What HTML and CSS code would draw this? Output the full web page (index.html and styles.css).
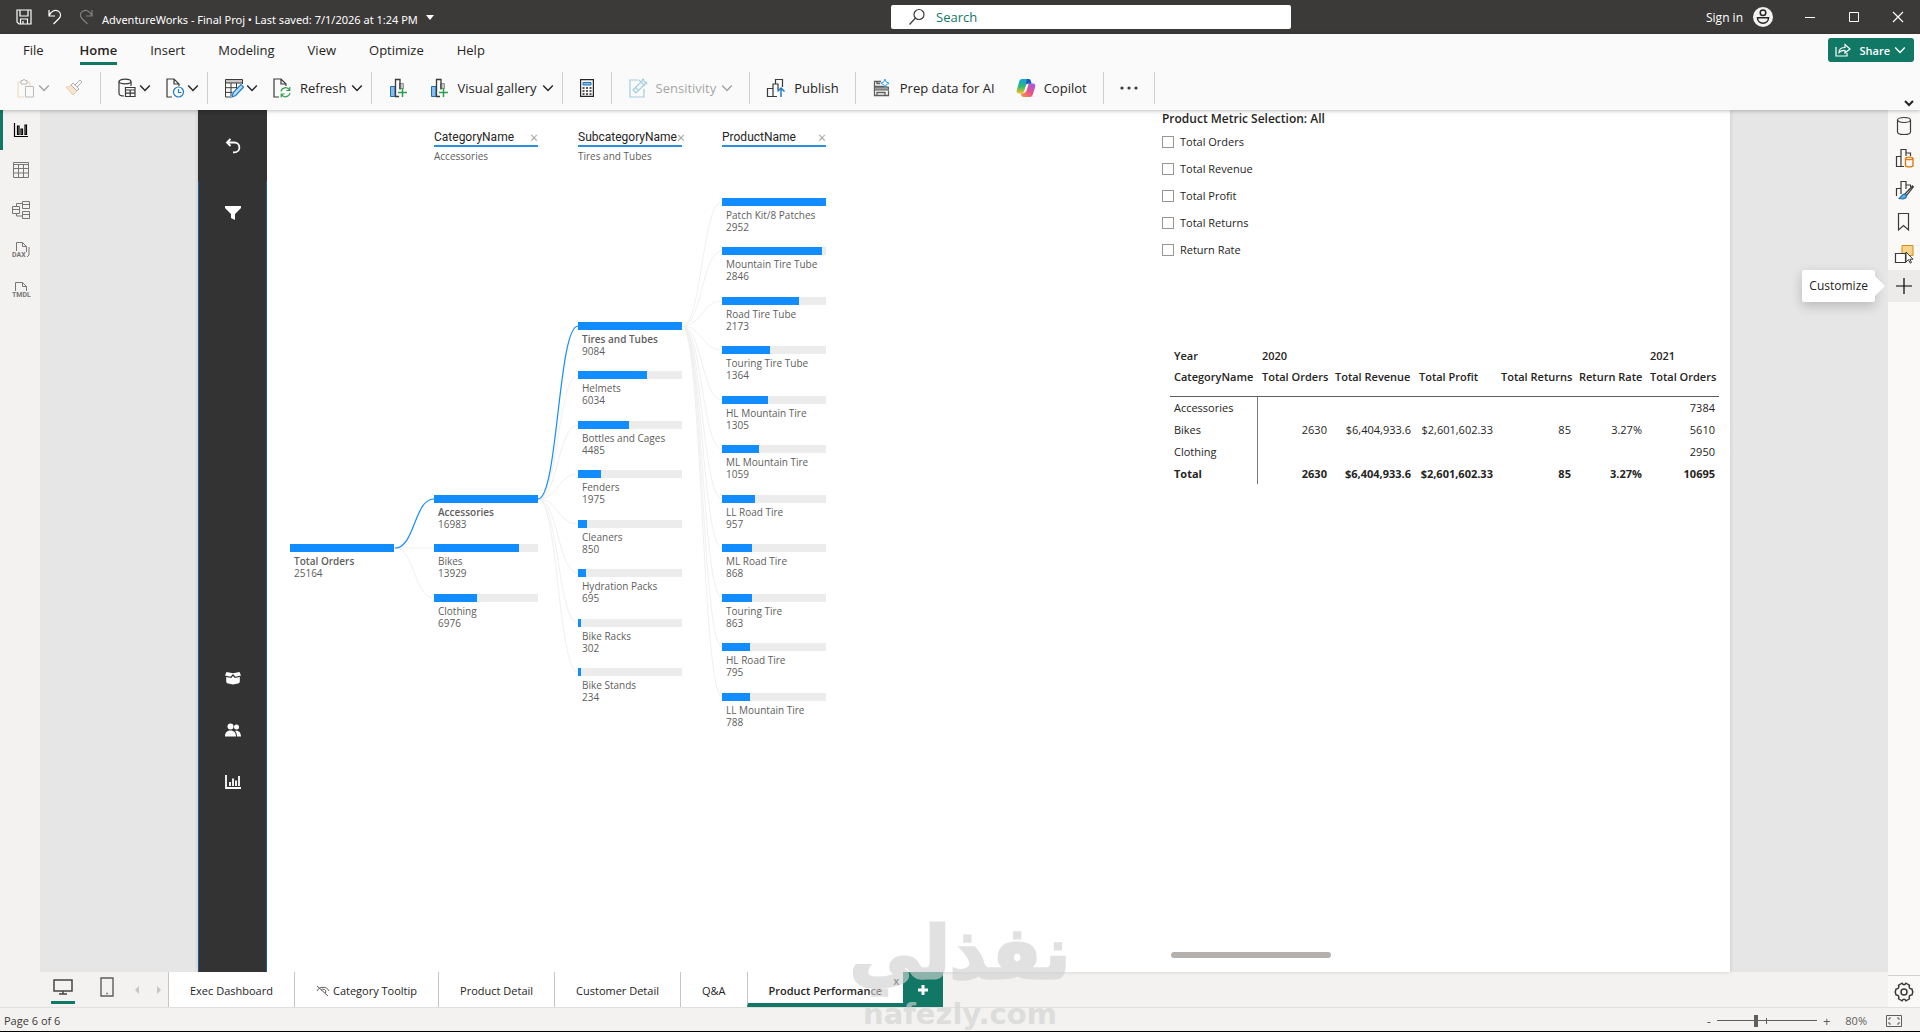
FILE: index.html
```html
<!DOCTYPE html>
<html lang="en">
<head>
    <meta charset="UTF-8">
    <meta name="viewport" content="width=device-width, initial-scale=1.0">
    <title>AdventureWorks - Final Proj</title>
    <link rel="stylesheet" href="styles.css">
</head>
<body>
    <!-- Shared icons -->
    <svg class="sprite" aria-hidden="true">
        <symbol id="chevron" viewBox="0 0 10 10"><path d="M1 3l4 4 4-4" fill="none" stroke="currentColor" stroke-width="1.2"/></symbol>
        <symbol id="chart-add" viewBox="0 0 20 20">
            <path d="M2.500 8.500h4.500v10h-4.500z" fill="#83beec" stroke="#1e70b5"/>
            <path d="M11.500 5.500h4v5h-4z" fill="#c8c6c4" stroke="#979593"/>
            <path d="M7.500 18.500v-17h4.500v10M7 18.500h4" fill="none" stroke="#3b3a39" stroke-width="1.300"/>
            <path d="M14.500 10v9M10 14.500h9" stroke="#2f9e4f" stroke-width="1.500"/>
        </symbol>
    </svg>

    <header class="titlebar">
        <div class="title-left">
            <button class="title-btn" aria-label="Save"><svg width="16" height="16" viewBox="0 0 16 16" fill="none" stroke="currentColor" stroke-width="1.200"><path d="M1 1h14v14H3l-2-2zM4 1v6h8V1M4.500 15v-5h7v5M7 12v3"/></svg></button>
            <button class="title-btn" aria-label="Undo"><svg width="16" height="16" viewBox="0 0 16 16" fill="none" stroke="currentColor" stroke-width="1.200"><path d="M2 1v6h6M2 7c2-5 6-6.500 9-5 3.500 1.800 3 5.500 1 7.500l-5.500 5.500"/></svg></button>
            <button class="title-btn dim" aria-label="Redo"><svg width="16" height="16" viewBox="0 0 16 16" fill="none" stroke="currentColor" stroke-width="1.200"><path d="M14 1v6H8M14 7c-2-5-6-6.500-9-5-3.500 1.800-3 5.500-1 7.500L9.500 15"/></svg></button>
            <span class="doc-name">AdventureWorks - Final Proj • Last saved: 7/1/2026 at 1:24 PM</span>
            <svg class="doc-caret" width="8" height="5" viewBox="0 0 8 5"><path d="M0 0h8L4 5z" fill="currentColor"/></svg>
        </div>
        <label class="search">
            <svg width="18" height="18" viewBox="0 0 18 18" fill="none" stroke="#3b3a39" stroke-width="1.200"><circle cx="11" cy="6.500" r="5"/><path d="M7.500 10L1.500 16.500"/></svg>
            <input type="text" placeholder="Search" aria-label="Search">
        </label>
        <div class="title-right">
            <button class="sign-in">Sign in
                <svg width="20" height="20" viewBox="0 0 20 20"><circle cx="10" cy="10" r="10" fill="#f3f2f1"/><g fill="none" stroke="#252423" stroke-width="1.500"><circle cx="10" cy="5.800" r="2.800"/><path d="M4.500 10.800h11c0 3.500-2.500 5.400-5.500 5.400s-5.500-1.900-5.500-5.400z"/></g></svg>
            </button>
            <button class="win-btn" aria-label="Minimize"><svg width="12" height="12" viewBox="0 0 12 12" stroke="currentColor"><path d="M1 6.500h10"/></svg></button>
            <button class="win-btn" aria-label="Maximize"><svg width="12" height="12" viewBox="0 0 12 12" stroke="currentColor" fill="none"><path d="M1.500 1.500h9v9h-9z"/></svg></button>
            <button class="win-btn" aria-label="Close"><svg width="12" height="12" viewBox="0 0 12 12" stroke="currentColor" stroke-width="1.200"><path d="M1 1l10 10M11 1L1 11"/></svg></button>
        </div>
    </header>

    <div class="ribbon">
        <nav class="menu">
            <button>File</button>
            <button class="active">Home</button>
            <button>Insert</button>
            <button>Modeling</button>
            <button>View</button>
            <button>Optimize</button>
            <button>Help</button>
            <button class="share">
                <svg width="16" height="14" viewBox="0 0 16 14" fill="none" stroke="currentColor" stroke-width="1.200"><path d="M1 4v9h11v-3M4 9.500C4 6 6.500 4.500 10 4.500V1.500l5 4.500-5 4V7.500C7.500 7.300 5.500 8 4 9.500z"/></svg>
                Share
                <svg class="chev"><use href="#chevron"/></svg>
            </button>
        </nav>
        <div class="toolbar">
            <div class="group">
                <button class="tool faded" aria-label="Paste">
                    <svg width="20" height="20" viewBox="0 0 20 20" fill="none"><path d="M2 4h3M11 4h3v4M2 4v15h6" stroke="#e8a14c"/><path d="M5 2.500h2l1-1.500 1 1.500h2V6H5z" stroke="#605e5c"/><path d="M9.500 8.500h8v10.500h-8z" stroke="#605e5c"/></svg>
                    <svg class="chev"><use href="#chevron"/></svg>
                </button>
                <button class="tool faded" aria-label="Format painter">
                    <svg width="20" height="20" viewBox="0 0 20 20"><path d="M2 9l7 8 4-4-6-6c-1.500 1.500-3 2-5 2z" fill="#f5c98f" stroke="#c98a3a"/><path d="M7 7l2-2 6 6-2 2zM11 7l5-5 2 2-5 5" fill="none" stroke="#484644"/></svg>
                </button>
            </div>
            <div class="group drop">
                <button class="tool" aria-label="Get data">
                    <svg width="20" height="20" viewBox="0 0 20 20" fill="none" stroke="#3b3a39" stroke-width="1.200"><ellipse cx="8" cy="3.500" rx="6" ry="2.300"/><path d="M2 3.500v12c0 1.500 2 2.500 5 2.500M14 3.500V8M8.500 9.500h9.500v9H8.500zM8.500 12h9.500M8.500 15.200h9.500M13.200 12v6.500"/></svg>
                    <svg class="chev"><use href="#chevron"/></svg>
                </button>
                <button class="tool" aria-label="Recent sources">
                    <svg width="20" height="20" viewBox="0 0 20 20" fill="none" stroke="#3b3a39" stroke-width="1.200"><path d="M7 19H2V1h7l5 5v2M9 1v5h5"/><g stroke="#1e7cc8"><circle cx="13.500" cy="14" r="5"/><path d="M13.500 11v3.500h3"/></g></svg>
                    <svg class="chev"><use href="#chevron"/></svg>
                </button>
            </div>
            <div class="group drop">
                <button class="tool" aria-label="Transform data">
                    <svg width="20" height="20" viewBox="0 0 20 20" fill="none"><path d="M1.500 1.500h17v3.500h-17z" fill="#c8c6c4"/><path d="M7 19H1.500V1.500h17V6M1.500 5h17M1.500 9.700h12M1.500 14.400h7M7 5v13M12.500 5v6" stroke="#3b3a39"/><path d="M8 19l1.200-4.500L17 6.700l2.500 2.500-7.800 8.300z" fill="#b5dcf7" stroke="#1e7cc8" stroke-width="1.200"/></svg>
                    <svg class="chev"><use href="#chevron"/></svg>
                </button>
                <button class="tool">
                    <svg width="20" height="20" viewBox="0 0 20 20" fill="none" stroke="#3b3a39" stroke-width="1.200"><path d="M7 19H2V1h7l5 5v2M9 1v5h5"/><path d="M9 13.500a4.600 4.600 0 0 1 8.500-1.500M17.800 9v3.500h-3.500M18 15a4.600 4.600 0 0 1-8.500 1.500M9.200 19.500V16h3.500" stroke="#2f9e4f"/></svg>
                    <span>Refresh</span>
                    <svg class="chev"><use href="#chevron"/></svg>
                </button>
            </div>
            <div class="group drop wide">
                <button class="tool" aria-label="New visual"><svg width="20" height="20"><use href="#chart-add"/></svg></button>
                <button class="tool">
                    <svg width="20" height="20"><use href="#chart-add"/></svg>
                    <span>Visual gallery</span>
                    <svg class="chev"><use href="#chevron"/></svg>
                </button>
            </div>
            <div class="group">
                <button class="tool" aria-label="New measure">
                    <svg width="16" height="20" viewBox="0 0 16 20" fill="none"><path d="M1.600 1.600h12.800v16.800H1.600z" stroke="#252423" stroke-width="1.200"/><path d="M4 4.500h8v2.500H4z" fill="#83beec" stroke="#1e70b5"/><path d="M3.500 10h2M7 10h2M10.500 10h2M3.500 13h2M7 13h2M10.500 13h2M3.500 16h2M7 16h2M10.500 16h2" stroke="#252423" stroke-width="1.600"/></svg>
                </button>
            </div>
            <div class="group">
                <button class="tool faded">
                    <svg width="20" height="20" viewBox="0 0 20 20" fill="none" stroke="#1e8fb5" stroke-width="1.200"><path d="M10 2H2v17h14v-8"/><path d="M5 12l8-8 3 3-8 8zM7 14l-2-2M11 2l6 6M14 1l5 5M12 5l4-4M15 8l4-4M8 10l3 3"/></svg>
                    <span>Sensitivity</span>
                    <svg class="chev"><use href="#chevron"/></svg>
                </button>
            </div>
            <div class="group">
                <button class="tool">
                    <svg width="20" height="20" viewBox="0 0 20 20" fill="none" stroke="#3b3a39" stroke-width="1.200"><path d="M7 18.500H1.500v-8h5M11 18.500H7V6h5v6M9.500 6V1.500h7V9"/><path d="M15 19v-9M11.500 13.500L15 10l3.500 3.500" stroke="#1e7cc8" stroke-width="1.500"/></svg>
                    <span>Publish</span>
                </button>
            </div>
            <div class="group wide">
                <button class="tool">
                    <svg width="20" height="20" viewBox="0 0 20 20" fill="none" stroke="#605e5c"><path d="M9 3.500H2.500v5h12M5 3.500v2h3M2.500 8.500v9h14v-5M5 17.500v-3h8v3" stroke-width="1.300"/><path d="M2.500 9h14v3h-14z" fill="#a19f9d"/><path d="M13 1l1.200 3 3 1.200-3 1.300L13 9.500l-1.200-3-3-1.300 3-1.200z" fill="#fff" stroke="#3aa0e0"/></svg>
                    <span>Prep data for AI</span>
                </button>
                <button class="tool">
                    <svg width="20" height="20" viewBox="0 0 20 20">
                        <defs>
                            <linearGradient id="cop1" x1="0" y1="0" x2="0" y2="1"><stop offset="0" stop-color="#16a0dc"/><stop offset=".5" stop-color="#2db67a"/><stop offset="1" stop-color="#f5c518"/></linearGradient>
                            <linearGradient id="cop2" x1="1" y1="0" x2="0" y2="1"><stop offset="0" stop-color="#9b5cf0"/><stop offset=".5" stop-color="#e8508f"/><stop offset="1" stop-color="#f8963a"/></linearGradient>
                        </defs>
                        <path d="M6 1h6.500c1.400 0 2 1 2.400 2.400l.6 2h-3c-1.500 0-2.200 1-2.600 2.200L8 13.500C7.500 15 6.800 15.500 5 15.500H3c-2 0-2.700-1.800-2.200-3.500l2.400-8.600C3.700 1.900 4.500 1 6 1z" fill="url(#cop1)"/>
                        <path d="M14 19H7.500c-1.400 0-2-1-2.400-2.400l-.4-1.200H7c1.500 0 2.200-.8 2.600-2l2-6c.5-1.500 1.200-2 3-2H17c2 0 2.700 1.800 2.200 3.500l-2.400 7.700C16.300 18.100 15.500 19 14 19z" fill="url(#cop2)"/>
                        <path d="M12.500 1c1.400 0 2 1 2.400 2.400l.6 2h-3l-2.500.6L11 1z" fill="#1b52c4"/>
                        <path d="M10.800 6.200h1.700l-2.400 7.500H8.400z" fill="#fff"/>
                    </svg>
                    <span>Copilot</span>
                </button>
            </div>
            <div class="group">
                <button class="tool" aria-label="More options"><svg width="18" height="4" viewBox="0 0 18 4" fill="#3b3a39"><circle cx="2" cy="2" r="1.600"/><circle cx="9" cy="2" r="1.600"/><circle cx="16" cy="2" r="1.600"/></svg></button>
            </div>
            <button class="collapse" aria-label="Collapse ribbon"><svg width="10" height="10" viewBox="0 0 10 10" fill="none" stroke="#252423" stroke-width="2"><path d="M1 3l4 4 4-4"/></svg></button>
        </div>
    </div>

    <main class="workspace">
        <nav class="views">
            <button class="active" aria-label="Report view"><svg width="16" height="16" viewBox="0 0 16 16" fill="none" stroke="#000" stroke-width="1.200"><path d="M1.500 1v13.500H15M4.500 12.500V4h1.500v8.500zM8 12.500V7h1.500v5.500zM12 12.500V3h1.500v9.500z"/></svg></button>
            <button aria-label="Table view"><svg width="16" height="16" viewBox="0 0 16 16" fill="none" stroke="currentColor"><path d="M.5.5h15v15H.5zM.5 2.500h15M.5 6.500h15M.5 11h15M5.500 2.500v13M10.500 2.500v13"/></svg></button>
            <button aria-label="Model view"><svg width="18" height="18" viewBox="0 0 18 18" fill="none" stroke="currentColor"><path d="M.5 5.500h7v7h-7zM.5 8.500h7M10.500.5h7v7h-7zM10.500 3.500h7M10.500 10.500h7v7h-7zM10.500 13.500h7M4.500 5.500v-3h6M4.500 12.500v2.500h6"/></svg></button>
            <button aria-label="DAX query view"><svg width="20" height="18" viewBox="0 0 20 18" fill="none" stroke="currentColor"><path d="M5.500 10V1.500h6l4 4V11M11.500 1.500v4h4M18 6v8l-2 2"/><text class="icon-text" x="1" y="16">DAX</text></svg></button>
            <button aria-label="TMDL view"><svg width="20" height="18" viewBox="0 0 20 18" fill="none" stroke="currentColor"><path d="M4.500 10V1.500h7l4 4V10M11.500 1.500v4h4"/><text class="icon-text" x="1" y="16">TMDL</text></svg></button>
        </nav>

        <section class="center">
            <div class="stage">
                <div class="page">
                    <nav class="page-nav">
                        <button class="back" aria-label="Back"><svg width="16" height="16" viewBox="0 0 16 16" fill="none" stroke="#fff" stroke-width="1.800"><path d="M5.500 1L2 4.500 5.500 8M2 4.500h7.500a4.800 4.800 0 0 1 0 9.800H8"/></svg></button>
                        <div class="page-links">
                            <button aria-label="Filters"><svg width="16" height="14" viewBox="0 0 16 14"><path d="M0 0h16v2l-6 6v6l-4-2V8L0 2z" fill="#fff"/></svg></button>
                            <div class="bottom-links">
                                <button aria-label="Products"><svg width="16" height="14" viewBox="0 0 16 14" fill="#fff"><path d="M1.500 1L8 2.200 14.500 1 16 4.500l-5.500 1.300L8 3 5.500 5.800 0 4.500z"/><path d="M1.200 6l5 1L8 5l1.800 2 5-1v4.500c0 1-.8 1.700-1.800 2l-5 1-5-1c-1-.3-1.800-1-1.800-2z"/></svg></button>
                                <button aria-label="Customers"><svg width="16" height="14" viewBox="0 0 16 14" fill="#fff"><circle cx="5.500" cy="3.500" r="3"/><circle cx="11.500" cy="4" r="2.500"/><path d="M0 13.500c0-3.800 2-6 5.500-6s5.500 2.200 5.500 6zM12 13.500c0-2.500-.6-4.500-2-5.500 3.500-1 6 1.500 6 5.500z"/></svg></button>
                                <button aria-label="Dashboard"><svg width="16" height="14" viewBox="0 0 16 14" fill="none" stroke="#fff" stroke-width="1.800"><path d="M1 0v13h15M5 11V7M8 11V3.500M11 11V5.500M14 11V1"/></svg></button>
                            </div>
                        </div>
                    </nav>

                    <!-- Decomposition tree -->
                    <div class="tree">
                        <svg class="links" width="536" height="600" viewBox="0 0 536 600" fill="none">
                            <g stroke="#f0f0f0">
                                <path d="M105 438H144M105 438C125 438 124 488 144 488"/>
                                <path d="M248 389C268 389 268 265 288 265M248 389C268 389 268 315 288 315M248 389C268 389 268 364 288 364M248 389C268 389 268 414 288 414M248 389C268 389 268 463 288 463M248 389C268 389 268 513 288 513M248 389C268 389 268 562 288 562"/>
                                <path d="M392 216C412 216 412 92 432 92M392 216C412 216 412 141 432 141M392 216C412 216 412 191 432 191M392 216C412 216 412 240 432 240M392 216C412 216 412 290 432 290M392 216C412 216 412 339 432 339M392 216C412 216 412 389 432 389M392 216C412 216 412 438 432 438M392 216C412 216 412 488 432 488M392 216C412 216 412 537 432 537M392 216C412 216 412 587 432 587"/>
                            </g>
                            <g stroke="#118dff" stroke-width="1.200">
                                <path d="M105 438C125 438 124 389 144 389"/>
                                <path d="M248 389C268 389 268 216 288 216"/>
                            </g>
                        </svg>
                        <div class="level root">
                            <ul>
                                <li class="node selected"><div class="bar"><i style="width: 100%"></i></div><b>Total Orders</b><span>25164</span></li>
                            </ul>
                        </div>
                        <div class="level category">
                            <div class="level-head"><h3>CategoryName</h3><button aria-label="Remove level">×</button></div>
                            <p>Accessories</p>
                            <ul>
                                <li class="node selected"><div class="bar"><i style="width: 100%"></i></div><b>Accessories</b><span>16983</span></li>
                                <li class="node"><div class="bar"><i style="width: 82%"></i></div><b>Bikes</b><span>13929</span></li>
                                <li class="node"><div class="bar"><i style="width: 41%"></i></div><b>Clothing</b><span>6976</span></li>
                            </ul>
                        </div>
                        <div class="level subcategory">
                            <div class="level-head"><h3>SubcategoryName</h3><button aria-label="Remove level">×</button></div>
                            <p>Tires and Tubes</p>
                            <ul>
                                <li class="node selected"><div class="bar"><i style="width: 100%"></i></div><b>Tires and Tubes</b><span>9084</span></li>
                                <li class="node"><div class="bar"><i style="width: 66%"></i></div><b>Helmets</b><span>6034</span></li>
                                <li class="node"><div class="bar"><i style="width: 49%"></i></div><b>Bottles and Cages</b><span>4485</span></li>
                                <li class="node"><div class="bar"><i style="width: 22%"></i></div><b>Fenders</b><span>1975</span></li>
                                <li class="node"><div class="bar"><i style="width: 9%"></i></div><b>Cleaners</b><span>850</span></li>
                                <li class="node"><div class="bar"><i style="width: 8%"></i></div><b>Hydration Packs</b><span>695</span></li>
                                <li class="node"><div class="bar"><i style="width: 3%"></i></div><b>Bike Racks</b><span>302</span></li>
                                <li class="node"><div class="bar"><i style="width: 3%"></i></div><b>Bike Stands</b><span>234</span></li>
                            </ul>
                        </div>
                        <div class="level product">
                            <div class="level-head"><h3>ProductName</h3><button aria-label="Remove level">×</button></div>
                            <p></p>
                            <ul>
                                <li class="node"><div class="bar"><i style="width: 100%"></i></div><b>Patch Kit/8 Patches</b><span>2952</span></li>
                                <li class="node"><div class="bar"><i style="width: 96%"></i></div><b>Mountain Tire Tube</b><span>2846</span></li>
                                <li class="node"><div class="bar"><i style="width: 74%"></i></div><b>Road Tire Tube</b><span>2173</span></li>
                                <li class="node"><div class="bar"><i style="width: 46%"></i></div><b>Touring Tire Tube</b><span>1364</span></li>
                                <li class="node"><div class="bar"><i style="width: 44%"></i></div><b>HL Mountain Tire</b><span>1305</span></li>
                                <li class="node"><div class="bar"><i style="width: 36%"></i></div><b>ML Mountain Tire</b><span>1059</span></li>
                                <li class="node"><div class="bar"><i style="width: 32%"></i></div><b>LL Road Tire</b><span>957</span></li>
                                <li class="node"><div class="bar"><i style="width: 29%"></i></div><b>ML Road Tire</b><span>868</span></li>
                                <li class="node"><div class="bar"><i style="width: 29%"></i></div><b>Touring Tire</b><span>863</span></li>
                                <li class="node"><div class="bar"><i style="width: 27%"></i></div><b>HL Road Tire</b><span>795</span></li>
                                <li class="node"><div class="bar"><i style="width: 27%"></i></div><b>LL Mountain Tire</b><span>788</span></li>
                            </ul>
                        </div>
                    </div>

                    <div class="metrics">
                        <fieldset class="slicer">
                            <legend>Product Metric Selection: All</legend>
                            <label><input type="checkbox">Total Orders</label>
                            <label><input type="checkbox">Total Revenue</label>
                            <label><input type="checkbox">Total Profit</label>
                            <label><input type="checkbox">Total Returns</label>
                            <label><input type="checkbox">Return Rate</label>
                        </fieldset>
                        <table class="matrix">
                            <colgroup><col class="c-name"><col class="c-orders"><col class="c-revenue"><col class="c-profit"><col class="c-returns"><col class="c-rate"><col class="c-orders"></colgroup>
                            <thead>
                                <tr><th>Year</th><th colspan="5">2020</th><th>2021</th></tr>
                                <tr><th>CategoryName</th><th>Total Orders</th><th>Total Revenue</th><th>Total Profit</th><th>Total Returns</th><th>Return Rate</th><th>Total Orders</th></tr>
                            </thead>
                            <tbody>
                                <tr><th>Accessories</th><td></td><td></td><td></td><td></td><td></td><td>7384</td></tr>
                                <tr><th>Bikes</th><td>2630</td><td>$6,404,933.6</td><td>$2,601,602.33</td><td>85</td><td>3.27%</td><td>5610</td></tr>
                                <tr><th>Clothing</th><td></td><td></td><td></td><td></td><td></td><td>2950</td></tr>
                                <tr class="total"><th>Total</th><td>2630</td><td>$6,404,933.6</td><td>$2,601,602.33</td><td>85</td><td>3.27%</td><td>10695</td></tr>
                            </tbody>
                        </table>
                        <div class="scroll-thumb"></div>
                    </div>
                </div>
            </div>

            <div class="sheet-bar">
                <div class="layouts">
                    <button class="active" aria-label="Desktop layout"><svg width="20" height="16" viewBox="0 0 20 16" fill="none" stroke="#484644" stroke-width="1.500"><path d="M1 1h18v11H1zM10 12v3M6 15h8"/></svg></button>
                    <button class="phone" aria-label="Mobile layout"><svg width="14" height="20" viewBox="0 0 14 20" fill="none" stroke="#605e5c" stroke-width="1.400"><path d="M1 1h12v18H1zM6.300 16.500h1.500"/></svg></button>
                    <button class="arrow" aria-label="Previous pages"><svg width="6" height="8" viewBox="0 0 6 8"><path d="M5 0v8L1 4z" fill="#c8c6c4"/></svg></button>
                    <button class="arrow" aria-label="Next pages"><svg width="6" height="8" viewBox="0 0 6 8"><path d="M1 0v8l4-4z" fill="#c8c6c4"/></svg></button>
                </div>
                <button class="sheet">Exec Dashboard</button>
                <button class="sheet"><svg width="14" height="12" viewBox="0 0 14 12" fill="none" stroke="#605e5c"><path d="M1 6c2-5 10-5 12 0M1 1l11 10M9.500 8A2.500 2.500 0 1 0 5 5.500"/></svg>Category Tooltip</button>
                <button class="sheet">Product Detail</button>
                <button class="sheet">Customer Detail</button>
                <button class="sheet">Q&amp;A</button>
                <button class="sheet current">Product Performance<span class="close">x</span></button>
                <button class="add" aria-label="New page"><svg width="12" height="12" viewBox="0 0 12 12" stroke="#fff" stroke-width="3"><path d="M6 1v10M1 6h10"/></svg></button>
            </div>
        </section>

        <aside class="panes">
            <button aria-label="Data"><svg width="20" height="20" viewBox="0 0 20 20" fill="none" stroke="#3b3a39" stroke-width="1.200"><ellipse cx="10" cy="4" rx="6.500" ry="2.500"/><path d="M3.500 4v12c0 3.300 13 3.300 13 0V4"/></svg></button>
            <button aria-label="Build visual"><svg width="20" height="20" viewBox="0 0 20 20" fill="none" stroke="#3b3a39" stroke-width="1.200"><path d="M10 18.500H2.500v-10H7M7 18.500v-17h5V8M12 5h4.500v3"/><path d="M11.500 10.500v7c0 1.800 7.500 1.800 7.500 0v-7c0-1.800-7.500-1.800-7.500 0c0 1.500 7.500 1.500 7.500 0" stroke="#e07b12" stroke-width="1.400"/></svg></button>
            <button aria-label="Format visual"><svg width="20" height="20" viewBox="0 0 20 20" fill="none" stroke="#3b3a39" stroke-width="1.200"><path d="M2.500 16V8.500H7M7 14V1.500h5V9M12 5h4.500v2"/><path d="M11 14l7.500-8 .8.900L12.500 15.500z" fill="#fff"/><path d="M4.500 18.500c3 0 2.500-4.500 6-4.300 2.500.3 3 4.300-1.500 4.600z" fill="#62aee8" stroke="#1e70b5"/></svg></button>
            <button aria-label="Bookmarks"><svg width="20" height="20" viewBox="0 0 20 20" fill="none" stroke="#3b3a39" stroke-width="1.200"><path d="M4.500 1.500h10v16.500l-5-4.500-5 4.500z"/></svg></button>
            <button aria-label="Selection"><svg width="20" height="20" viewBox="0 0 20 20" fill="none"><path d="M8 1.500h11v10H8z" fill="#f8d48a" stroke="#d68a1c"/><path d="M1.500 9.500h10v9h-10z" fill="#fff" stroke="#3b3a39" stroke-width="1.200"/><path d="M12 8v10l2.500-2.300 1.700 3.500 1.300-.7-1.600-3.300H19z" fill="#fff" stroke="#3b3a39"/></svg></button>
            <button class="hover" aria-label="Customize"><svg width="18" height="18" viewBox="0 0 18 18" stroke="#000" stroke-width="1.200"><path d="M9 1v16M1 9h16"/></svg><span class="tooltip">Customize</span></button>
            <button class="gear" aria-label="Settings"><svg width="20" height="20" viewBox="0 0 20 20" fill="none" stroke="#3b3a39" stroke-width="1.500"><circle cx="10" cy="10" r="3"/><path d="M8 1.200c1 2 3 2 4 0l3.500 2c-1 2 0 3.800 2.400 3.700l.9 3.100-.9 3.100c-2.400-.1-3.400 1.700-2.400 3.700l-3.500 2c-1-2-3-2-4 0l-3.500-2c1-2 0-3.800-2.400-3.700L1.200 10l.9-3.100C4.500 7 5.500 5.200 4.500 3.200z"/></svg></button>
        </aside>
    </main>

    <footer class="status">
        <span>Page 6 of 6</span>
        <div class="zoom">
            <button aria-label="Zoom out">-</button>
            <input type="range" min="0" max="100" value="39" aria-label="Zoom">
            <button aria-label="Zoom in">+</button>
            <span class="percent">80%</span>
            <button class="fit" aria-label="Fit to page"><svg width="16" height="12" viewBox="0 0 16 12" fill="none" stroke="#605e5c"><path d="M.5.500h15v11H.5zM3 5V3h2M11 3h2v2M13 7v2h-2M5 9H3V7"/></svg></button>
        </div>
    </footer>

    <div class="watermark" aria-hidden="true">
        <span class="wm-ar" lang="ar" dir="rtl">نفذلي</span>
        <span class="wm-en">nafezly.com</span>
    </div>
</body>
</html>
```
FILE: styles.css
```css
* {
    box-sizing: border-box;
}
body {
    margin: 0;
    height: 100vh;
    display: flex;
    flex-direction: column;
    overflow: hidden;
    position: relative;
    font-family: "Open Sans", "Noto Sans", sans-serif;
    font-size: 13px;
    color: #252423;
    background-color: #f3f2f1;
}
button {
    border: none;
    background: none;
    padding: 0;
    margin: 0;
    font: inherit;
    color: inherit;
    display: flex;
    align-items: center;
    justify-content: center;
    cursor: pointer;
}
svg {
    flex: none;
}
h3, p, ul {
    margin: 0;
    padding: 0;
    list-style: none;
}
.sprite {
    position: absolute;
    width: 0;
    height: 0;
}
.chev {
    width: 12px;
    height: 12px;
}

/* Title bar */
.titlebar {
    flex: none;
    height: 34px;
    display: grid;
    grid-template-columns: 891fr 400px 629fr;
    align-items: center;
    background-color: #3b3a39;
    color: #fff;
    font-size: 12px;
}
.title-left {
    display: flex;
    align-items: center;
    padding-left: 16px;
}
.title-btn {
    width: 16px;
    margin-right: 15px;
}
.title-btn.dim {
    opacity: 0.35;
    margin-right: 8px;
}
.doc-name {
    padding-top: 4px;
    font-family: "Noto Sans", sans-serif;
    font-size: 11px;
}
.doc-caret {
    margin-left: 8px;
}
.search {
    height: 24px;
    display: flex;
    align-items: center;
    gap: 10px;
    padding-left: 17px;
    background-color: #fff;
    border-radius: 2px;
}
.search input {
    flex: 1;
    border: none;
    outline: none;
    background: none;
    padding: 0;
    font: inherit;
    font-size: 13px;
}
.search input::placeholder {
    color: #117865;
}
.title-right {
    display: flex;
    justify-content: flex-end;
}
.sign-in {
    gap: 10px;
    margin-right: 15px;
    font-size: 12px;
}
.win-btn {
    width: 44px;
    height: 34px;
}

/* Ribbon */
.ribbon {
    flex: none;
    background-color: #fafafa;
    box-shadow: 0 1px 4px rgba(0,0,0,0.25);
    position: relative;
    z-index: 2;
}
.menu {
    height: 32px;
    display: flex;
    align-items: center;
    gap: 33px;
    padding: 0 6px 0 23px;
}
.menu button {
    height: 30px;
}
.menu .active {
    margin-left: 3px;
    font-weight: 600;
    border-bottom: 3px solid #117865;
    border-top: 3px solid transparent;
}
.menu .share {
    height: 24px;
    margin-left: auto;
    padding: 0 8px 0 7px;
    gap: 8px;
    border-radius: 3px;
    background-color: #117865;
    color: #fff;
    font-size: 11px;
    font-weight: 600;
}
.share .chev {
    margin-left: -4px;
}
.toolbar {
    height: 44px;
    display: flex;
    align-items: center;
}
.group {
    height: 32px;
    display: flex;
    align-items: center;
    gap: 14px;
    padding: 0 16px;
    border-right: 1px solid #d2d0ce;
}
.group.drop {
    padding-right: 8px;
}
.group.wide {
    gap: 21px;
}
.tool {
    height: 32px;
    gap: 8px;
}
.tool .chev {
    margin-left: -6px;
}
.tool span + .chev {
    margin-left: -3px;
}
.faded {
    opacity: 0.4;
}
.collapse {
    margin-left: auto;
    align-self: flex-end;
    padding: 0 6px 2px 0;
}

/* Workspace */
.workspace {
    flex: 1;
    min-height: 0;
    display: flex;
}
.views {
    width: 40px;
    display: flex;
    flex-direction: column;
    color: #797775;
}
.views button {
    height: 40px;
    padding-right: 2px;
    border-left: 3px solid transparent;
}
.views .active {
    border-left-color: #117865;
}
.icon-text {
    font-family: Roboto, sans-serif;
    font-size: 7px;
    font-weight: 700;
    fill: currentColor;
    stroke: none;
}
.center {
    flex: 1;
    min-width: 0;
    display: flex;
    flex-direction: column;
}
.stage {
    flex: 1;
    min-height: 0;
    display: flex;
    justify-content: center;
    background-color: #e6e6e6;
}
.page {
    flex: 1;
    max-width: 1532px;
    display: flex;
    background-color: #fff;
    box-shadow: 0 0 4px rgba(0,0,0,0.15);
}
.page-nav {
    width: 69px;
    display: flex;
    flex-direction: column;
    background-color: #333;
}
.page-nav .back {
    height: 71px;
}
.page-links {
    flex: 1;
    display: flex;
    flex-direction: column;
    justify-content: space-between;
    padding: 25px 0 183px;
    border: 1px solid #1c5a94;
    border-top: none;
    border-bottom: none;
}
.page-links button {
    width: 100%;
}
.bottom-links {
    display: flex;
    flex-direction: column;
    gap: 38px;
}

/* Decomposition tree */
.tree {
    position: relative;
    display: flex;
    gap: 40px;
    margin-left: 23px;
    color: #605e5c;
    font-size: 10px;
    line-height: 12px;
}
.links {
    position: absolute;
    left: 0;
    top: 0;
}
.level {
    width: 104px;
    padding-top: 20px;
}
.level-head {
    display: flex;
    justify-content: space-between;
    align-items: center;
    height: 17px;
    border-bottom: 2px solid #2b8ee0;
}
.level-head h3 {
    font-family: Roboto, sans-serif;
    font-size: 12px;
    font-weight: 400;
    line-height: 15px;
    color: #252423;
}
.level-head button {
    font-size: 14px;
    line-height: 15px;
    color: #a19f9d;
}
.level p {
    height: 15px;
    padding-top: 3px;
    white-space: nowrap;
}
.root ul {
    padding-top: 414px;
}
.category ul {
    padding-top: 333px;
}
.subcategory ul {
    padding-top: 160px;
}
.product ul {
    padding-top: 36px;
}
.node {
    padding-bottom: 14px;
}
.node:nth-child(even) {
    padding-bottom: 15px;
}
.node b, .node span {
    display: block;
    padding-left: 4px;
    white-space: nowrap;
    font-weight: 400;
}
.node.selected b {
    font-weight: 600;
}
.bar {
    height: 8px;
    margin-bottom: 3px;
    background-color: #ececec;
}
.bar i {
    display: block;
    height: 8px;
    background-color: #118dff;
}

/* Slicer and matrix */
.metrics {
    margin-left: auto;
    padding-right: 11px;
    display: flex;
    flex-direction: column;
}
.slicer {
    margin: 0;
    padding: 0;
    border: none;
    font-size: 11px;
}
.slicer legend {
    padding: 0;
    font-size: 12px;
    font-weight: 600;
    line-height: 18px;
}
.slicer label {
    height: 27px;
    display: flex;
    align-items: center;
    gap: 6px;
}
.slicer input {
    appearance: none;
    width: 12px;
    height: 12px;
    margin: 0;
    border: 1px solid #979593;
    background-color: #fff;
}
.matrix {
    width: 549px;
    margin: 81px 0 0 8px;
    border-collapse: collapse;
    table-layout: fixed;
    font-size: 11px;
}
.matrix th, .matrix td {
    height: 22px;
    padding: 0 4px;
    text-align: right;
    font-weight: 400;
    white-space: nowrap;
}
.matrix th {
    text-align: left;
}
.matrix thead th {
    height: 22px;
    font-weight: 600;
}
.matrix thead tr:last-child th {
    height: 30px;
    padding-bottom: 8px;
    border-bottom: 1px solid #605e5c;
}
.matrix tbody th {
    border-right: 1px solid #797775;
}
.matrix .total th, .matrix .total td {
    font-weight: 700;
}
.c-name {
    width: 88px;
}
.c-orders {
    width: 73px;
}
.c-revenue {
    width: 84px;
}
.c-profit {
    width: 82px;
}
.c-returns {
    width: 78px;
}
.c-rate {
    width: 71px;
}
.scroll-thumb {
    width: 160px;
    height: 6px;
    margin: auto 0 14px 9px;
    border-radius: 3px;
    background-color: #b3b0ad;
}

/* Page tabs */
.sheet-bar {
    flex: none;
    height: 35px;
    display: flex;
}
.layouts {
    width: 128px;
    display: flex;
    align-items: flex-start;
    padding-left: 11px;
}
.layouts button {
    flex: none;
    height: 32px;
}
.layouts .active {
    width: 24px;
    margin-right: 25px;
    border-bottom: 3px solid #117865;
}
.layouts .phone {
    width: 14px;
    margin-right: 20px;
    padding-bottom: 3px;
}
.layouts .arrow {
    width: 6px;
    height: 36px;
    margin-right: 16px;
}
.layouts .arrow:last-child {
    margin-right: 0;
}
.sheet {
    position: relative;
    gap: 3px;
    padding: 2px 21px 0;
    background-color: #fff;
    border-left: 1px solid #c8c6c4;
    font-size: 11px;
    white-space: nowrap;
}
.sheet.current {
    padding-top: 5px;
    font-weight: 600;
    border-bottom: 4px solid #117865;
}
.sheet .close {
    position: absolute;
    right: 4px;
    top: 2px;
    line-height: 14px;
}
.add {
    width: 40px;
    background-color: #117865;
}

/* Right rail */
.panes {
    width: 32px;
    display: flex;
    flex-direction: column;
    background-color: #faf9f8;
}
.panes button {
    height: 32px;
    position: relative;
}
.panes .hover {
    background-color: #edebe9;
}
.panes .gear {
    margin-top: auto;
    border-top: 1px solid #d2d0ce;
}
.tooltip {
    position: absolute;
    right: 45px;
    top: 0;
    height: 32px;
    padding: 0 7px;
    line-height: 32px;
    font-size: 12px;
    background-color: #fff;
    border-radius: 2px;
    box-shadow: 0 4px 12px rgba(0,0,0,0.2);
}
.tooltip::after {
    content: "";
    position: absolute;
    left: 100%;
    top: 6px;
    border: 10px solid transparent;
    border-left-color: #fff;
    border-right: none;
}

/* Status bar */
.status {
    flex: none;
    height: 25px;
    display: flex;
    align-items: center;
    justify-content: space-between;
    padding: 2px 18px 0 4px;
    border-top: 1px solid #e1dfdd;
    border-bottom: 1px solid #000;
    font-size: 11px;
    color: #3b3a39;
}
.zoom {
    display: flex;
    align-items: center;
    color: #605e5c;
}
.zoom button {
    font-size: 13px;
    line-height: 16px;
}
.zoom input {
    appearance: none;
    width: 100px;
    height: 12px;
    margin: 0 6px;
    background: linear-gradient(#605e5c, #605e5c) center / 1px 6px no-repeat,
        linear-gradient(#605e5c, #605e5c) center / 100% 1px no-repeat;
}
.zoom input::-webkit-slider-thumb {
    appearance: none;
    width: 4px;
    height: 12px;
    background-color: #605e5c;
}
.zoom .percent {
    margin: 0 19px 0 15px;
}

/* Watermark laid over the window */
.watermark {
    position: absolute;
    left: 50%;
    bottom: 0;
    width: 220px;
    margin-left: -110px;
    z-index: 5;
    display: flex;
    flex-direction: column;
    align-items: center;
    font-family: "DejaVu Sans", sans-serif;
    font-weight: 700;
    color: #d2d2d2;
    opacity: 0.65;
    pointer-events: none;
}
.wm-ar {
    font-size: 72px;
    line-height: 86px;
    -webkit-text-stroke: 3px #d2d2d2;
}
.wm-en {
    font-size: 29px;
    line-height: 36px;
}
```
